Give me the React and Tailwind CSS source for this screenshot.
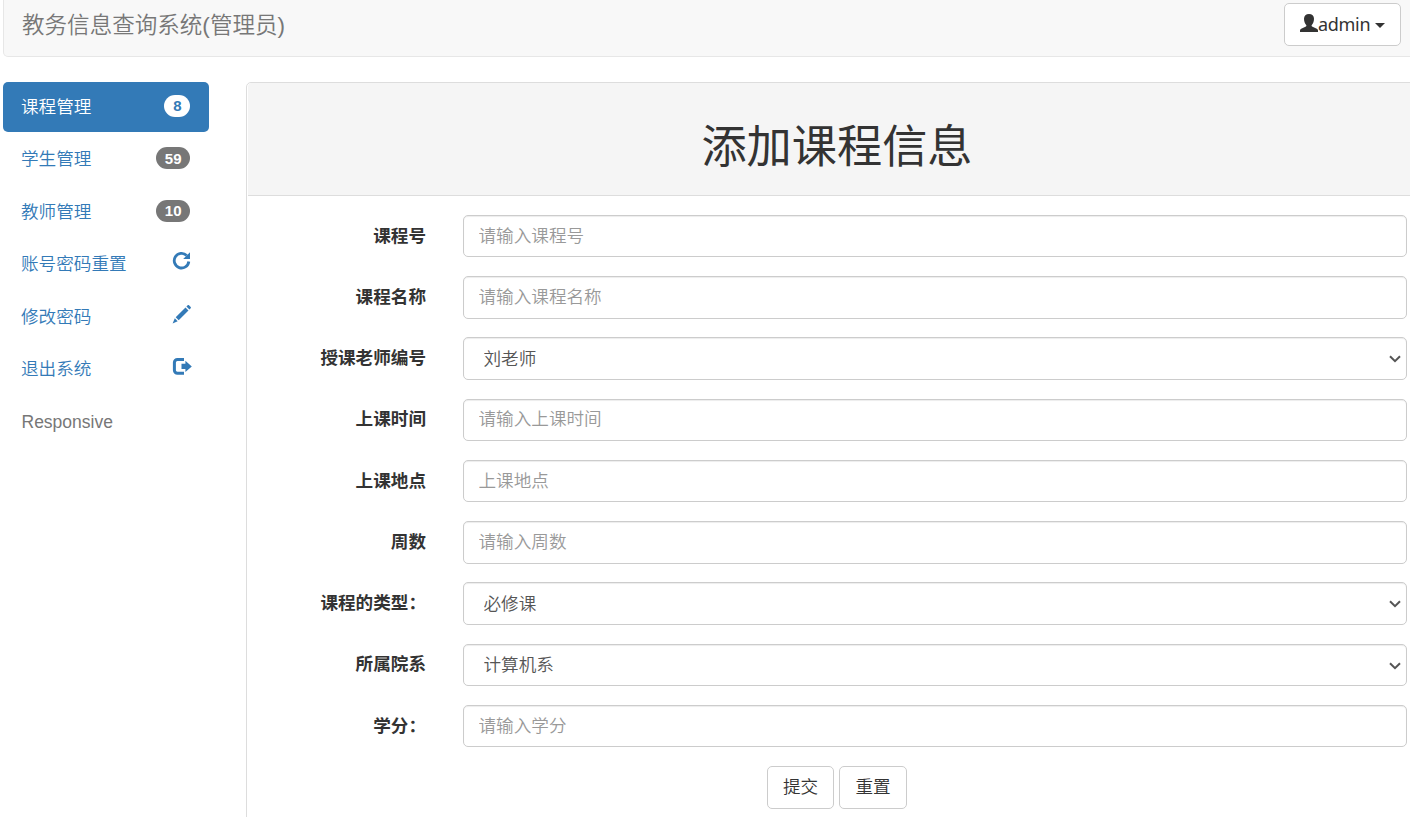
import React, { useState } from 'react';

const navItems = [
  { label: '课程管理', badge: 8 },
  { label: '学生管理', badge: 59 },
  { label: '教师管理', badge: 10 },
  { label: '账号密码重置', icon: RepeatIcon },
  { label: '修改密码', icon: PencilIcon },
  { label: '退出系统', icon: LogoutIcon },
];

const fields = [
  { label: '课程号', placeholder: '请输入课程号' },
  { label: '课程名称', placeholder: '请输入课程名称' },
  { label: '授课老师编号', options: ['刘老师'] },
  { label: '上课时间', placeholder: '请输入上课时间' },
  { label: '上课地点', placeholder: '上课地点' },
  { label: '周数', placeholder: '请输入周数' },
  { label: '课程的类型：', options: ['必修课', '选修课'] },
  { label: '所属院系', options: ['计算机系'] },
  { label: '学分：', placeholder: '请输入学分' },
];

function UserIcon() {
  return (
    <svg viewBox="0 0 18 18" className="w-[18px] h-[18px] shrink-0 -mt-1" fill="currentColor">
      <path d="M9 0C6 0 4 1.700 4 4.800c0 2.400.8 4.900 2.200 6.200.3.300.3 1.100-.2 1.400L1.200 14.800C.4 15.300 0 15.800 0 16.500V18h18v-1.500c0-.7-.4-1.200-1.200-1.700L12 12.400c-.5-.3-.5-1.100-.2-1.400C13.200 9.700 14 7.200 14 4.800 14 1.700 12 0 9 0z" />
    </svg>
  );
}

function RepeatIcon() {
  return (
    <svg viewBox="0 0 20 20" className="w-5 h-5 -mt-px" fill="none">
      <path d="M14.700 4.500A7.300 7.300 0 1 0 16.800 10.500" stroke="currentColor" strokeWidth="2.800" />
      <path d="M18 1.200v6.800h-6.800z" fill="currentColor" />
    </svg>
  );
}

function PencilIcon() {
  return (
    <svg viewBox="0 0 20 20" className="w-5 h-5 -mt-px" fill="currentColor">
      <path d="M15.700 1.200c.4-.4.9-.4 1.300 0l1.700 1.700c.4.4.4.9 0 1.300l-1.300 1.300-3-3zM13.500 3.400l3 3L6.700 16.300l-3-3zM2.800 14.300l2.900 2.900L.6 19.400z" />
    </svg>
  );
}

function LogoutIcon() {
  return (
    <svg viewBox="0 0 20 20" className="w-5 h-5" fill="none">
      <path d="M12 2.500H5.400a3 3 0 0 0-3 3v7.700a3 3 0 0 0 3 3H12" stroke="currentColor" strokeWidth="3" />
      <path d="M9.500 6.700h3.900V3.800l6.400 5.700-6.400 5.500v-2.900H9.500z" fill="currentColor" />
    </svg>
  );
}

function Field({ label, placeholder, options }) {
  return (
    <div className="flex h-[42.5px] mb-[18.75px]">
      <label className="w-[179px] shrink-0 text-right font-bold leading-[25px] pt-[8.8px]">{label}</label>
      <div className="relative ml-[37px] w-[944px] shrink-0">
        {options ? (
          <>
            <select className="block w-full h-[42.5px] appearance-none rounded-[5px] border border-[#ccc] bg-white pl-[19.5px] pr-8 pt-px text-[#555] shadow-[inset_0_1px_1px_rgba(0,0,0,0.075)] outline-none">
              {options.map((o) => (
                <option key={o}>{o}</option>
              ))}
            </select>
            <svg viewBox="0 0 12 8" className="absolute right-1.5 top-[18px] w-3 h-2 pointer-events-none" fill="none">
              <path d="M1 1.200l5 5 5-5" stroke="#555" strokeWidth="2" />
            </svg>
          </>
        ) : (
          <input
            type="text"
            placeholder={placeholder}
            className="block w-full h-[42.5px] rounded-[5px] border border-[#ccc] bg-white px-[14.5px] text-[#555] placeholder:text-[#999] shadow-[inset_0_1px_1px_rgba(0,0,0,0.075)] outline-none"
          />
        )}
      </div>
    </div>
  );
}

export default function App() {
  const [active, setActive] = useState(0);

  return (
    <div className="h-[817px] w-[1410px] overflow-hidden bg-white pl-[3px] text-[17.6px] leading-[25px] font-[350] text-[#333] font-['Liberation_Sans','Noto_Sans_CJK_SC',sans-serif]">
      {/* Navbar */}
      <nav className="flex h-[57px] w-[1425px] justify-between rounded-b-[5px] border border-t-0 border-[#e7e7e7] bg-[#f8f8f8]">
        <span className="pl-[18px] pt-[12.5px] text-[22.55px] text-[#777]">教务信息查询系统(管理员)</span>
        <button className="mr-[26px] mt-[3px] flex h-[43px] w-[117px] items-center rounded-[5px] border border-[#ccc] bg-white pl-[15px] font-['Noto_Sans',sans-serif]">
          <UserIcon />
          <span className="text-[18px] font-normal tracking-[-0.3px]">admin</span>
          <span className="ml-[5px] mt-px border-x-[5px] border-t-[5px] border-x-transparent border-t-[#333]" />
        </button>
      </nav>

      <div className="flex pt-[25px]">
        {/* Sidebar */}
        <ul className="w-[206px] shrink-0">
          {navItems.map((item, i) => {
            const Icon = item.icon;
            return (
              <li key={item.label} className="mb-[2.5px]">
                <a
                  onClick={() => setActive(i)}
                  className={`flex h-[50px] cursor-pointer justify-between rounded-[5px] pl-[18px] pr-[18.75px] pt-[12.5px] ${active === i ? 'bg-[#337ab7] text-white' : 'text-[#337ab7]'}`}
                >
                  {item.label}
                  {item.badge && (
                    <span
                      className={`flex h-[22px] min-w-[12.5px] items-center rounded-full px-[8.75px] text-[15px] font-bold ${active === i ? 'bg-white text-[#337ab7]' : 'bg-[#777] text-white'}`}
                    >
                      {item.badge}
                    </span>
                  )}
                  {Icon && (
                    <span className="-mr-[2px]">
                      <Icon />
                    </span>
                  )}
                </a>
              </li>
            );
          })}
          <li className="flex h-[50px] items-center pl-[18.5px] text-[17.5px] text-[#777]">Responsive</li>
        </ul>

        {/* Form panel */}
        <div className="ml-[37px] w-[1182px] shrink-0 rounded-[5px] border border-[#ddd] bg-white">
          <div className="flex h-[113px] items-center justify-center rounded-t-[4px] border-b border-[#ddd] bg-[#f5f5f5] ml-px">
            <h1 className="-ml-px pt-[17px] text-[45.2px] leading-[50px] font-normal">添加课程信息</h1>
          </div>
          <form className="pt-[18.8px]" onSubmit={(e) => e.preventDefault()}>
            {fields.map((f) => (
              <Field key={f.label} {...f} />
            ))}
            <div className="flex justify-center gap-[5px] pb-5">
              <button type="submit" className="h-[42.5px] w-[67px] rounded-[5px] border border-[#ccc] bg-white">
                提交
              </button>
              <button type="reset" className="h-[42.5px] w-[68px] rounded-[5px] border border-[#ccc] bg-white">
                重置
              </button>
            </div>
          </form>
        </div>
      </div>
    </div>
  );
}
